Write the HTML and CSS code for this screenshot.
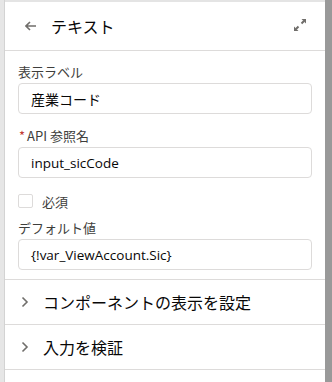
FILE: index.html
```html
<!DOCTYPE html>
<html lang="ja">
<head>
<meta charset="utf-8">
<link rel="stylesheet" href="styles.css">
</head>
<body>
<div class="frame">
  <div class="left-edge"></div>
  <div class="panel">
    <header class="header">
      <svg class="back" width="12" height="10" viewBox="0 0 12 10"><path d="M5 1 L1 5 L5 9 M1 5 H11" fill="none" stroke="#706e6b" stroke-width="1.6"/></svg>
      <h1 class="title">テキスト</h1>
      <svg class="expand" width="14" height="14" viewBox="0 0 14 14"><path d="M8.5 1 H13 V5.5 Z M1 13 V8.5 L5.5 13 Z" fill="#706e6b"/><path d="M11 3 L8.5 5.5 M3 11 L5.5 8.5" stroke="#706e6b" stroke-width="2"/></svg>
    </header>
    <div class="form">
      <div class="field">
        <label class="label">表示ラベル</label>
        <div class="input">産業コード</div>
      </div>
      <div class="field">
        <label class="label"><span class="req">*</span>API 参照名</label>
        <div class="input latin">input_sicCode</div>
      </div>
      <div class="check-row">
        <span class="checkbox"></span>
        <span class="check-label">必須</span>
      </div>
      <div class="field field-tight">
        <label class="label">デフォルト値</label>
        <div class="input latin">{!var_ViewAccount.Sic}</div>
      </div>
    </div>
    <div class="section">
      <svg class="chev" width="8" height="12" viewBox="0 0 8 12"><path d="M1.5 1.5 L6 6 L1.5 10.5" fill="none" stroke="#706e6b" stroke-width="1.6"/></svg>
      <span class="section-title">コンポーネントの表示を設定</span>
    </div>
    <div class="section">
      <svg class="chev" width="8" height="12" viewBox="0 0 8 12"><path d="M1.5 1.5 L6 6 L1.5 10.5" fill="none" stroke="#706e6b" stroke-width="1.6"/></svg>
      <span class="section-title">入力を検証</span>
    </div>
  </div>
  <div class="right-edge"></div>
</div>
</body>
</html>
```
FILE: styles.css
```css
html, body {
  margin: 0;
  padding: 0;
}
body {
  width: 332px;
  height: 382px;
  overflow: hidden;
  background: #e4e4e4;
  font-family: "Open Sans", "Noto Sans CJK JP", sans-serif;
  color: #080707;
}
.frame {
  display: flex;
  height: 382px;
}
.left-edge {
  width: 4px;
  background: #e6e6e6;
  border-right: 1px solid #d3d3d3;
}
.panel {
  flex: 1;
  margin-top: 2px;
  background: #fff;
  display: flex;
  flex-direction: column;
}
.right-edge {
  width: 7px;
  background: #999999;
}
.header {
  height: 48px;
  border-bottom: 1px solid #dddbda;
  display: flex;
  align-items: center;
  padding: 0 18px 0 20px;
}
.back {
  margin-right: 14px;
}
.title {
  margin: 0;
  font-size: 16px;
  font-weight: 400;
  flex: 1;
  font-family: "Noto Sans CJK JP", sans-serif;
}
.expand {
  margin-top: -2px;
}
.form {
  padding: 12px 13px 9px;
  border-bottom: 1px solid #dddbda;
}
.field {
  display: flex;
  flex-direction: column;
  margin-bottom: 13px;
}
.field-tight {
  margin-bottom: 0;
}
.label {
  font-size: 13px;
  line-height: 18px;
  color: #3e3e3c;
  margin-bottom: 2px;
  font-family: "Noto Sans CJK JP", sans-serif;
}
.req {
  color: #c23934;
  margin-right: 2px;
  margin-left: 1px;
}
.input {
  height: 29px;
  border: 1px solid #dddbda;
  border-radius: 4px;
  padding: 0 12px;
  display: flex;
  align-items: center;
  font-size: 14px;
  font-family: "Noto Sans CJK JP", sans-serif;
}
.input.latin {
  font-family: "Open Sans", "Noto Sans CJK JP", sans-serif;
  font-size: 13.5px;
}
.check-row {
  display: flex;
  align-items: center;
  height: 20px;
  margin: 0 0 8px;
}
.checkbox {
  width: 13px;
  height: 12px;
  border: 1px solid #dddbda;
  border-radius: 2px;
  margin-right: 9px;
}
.check-label {
  font-size: 13px;
  color: #3e3e3c;
  font-family: "Noto Sans CJK JP", sans-serif;
}
.section {
  height: 44px;
  border-bottom: 1px solid #dddbda;
  display: flex;
  align-items: center;
  padding-left: 16px;
}
.chev {
  margin-right: 14px;
}
.section-title {
  font-size: 16px;
  font-family: "Noto Sans CJK JP", sans-serif;
}
```
